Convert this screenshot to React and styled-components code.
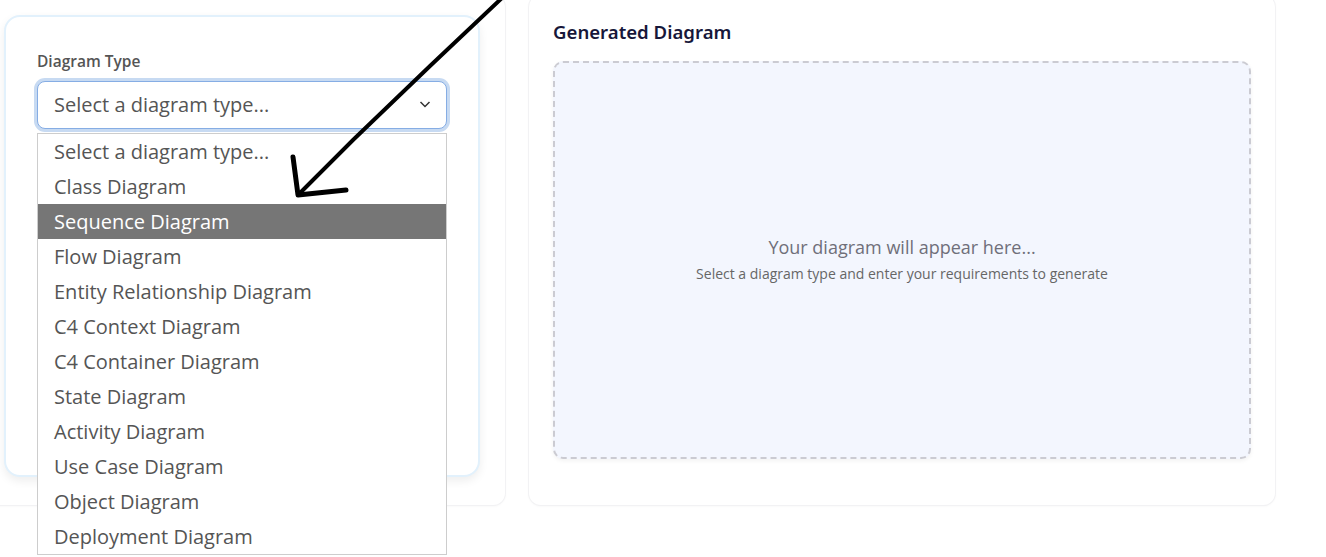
import React from "react";
import styled, { createGlobalStyle } from "styled-components";

const GlobalStyle = createGlobalStyle`
  html, body {
    margin: 0;
    background: #fff;
  }
  body {
    font-family: "Open Sans", "Noto Sans", sans-serif;
  }
  #root {
    min-height: 562px;
  }
`;

const Page = styled.div`
  position: relative;
  display: grid;
  grid-template-columns: 525px 746px;
  gap: 24px;
  align-items: start;
  margin: -5px 0 0 -20px;
`;

const Panel = styled.section`
  height: 510px;
  box-sizing: border-box;
  background: #fff;
  border-radius: 12px;
  box-shadow: 0 0 0 1px #f2f2f4, 0 1px 3px rgba(0, 0, 0, 0.05);
  padding: ${(p) => p.pad};
  display: flex;
  flex-direction: column;
`;

const FormCard = styled.div`
  position: relative;
  height: 462px;
  box-sizing: border-box;
  border: 2px solid #e2f1fc;
  border-radius: 16px;
  padding: 33px 31px;
  box-shadow: 0 4px 10px rgba(0, 0, 0, 0.07);
  background: #fff;
`;

const Label = styled.label`
  display: block;
  font-size: 15.5px;
  font-weight: 600;
  line-height: 22px;
  color: #555;
  margin-bottom: 9px;
`;

const SelectBox = styled.div`
  position: relative;
  height: 48px;
  box-sizing: border-box;
  border: 1px solid #86ade4;
  border-radius: 8px;
  box-shadow: 0 0 0 3px #c7daf2;
  display: flex;
  align-items: center;
  justify-content: space-between;
  padding: 0 14px 2px 16px;
  font-size: 20px;
  color: #555;
  background: #fff;
`;

const Chevron = styled.svg`
  width: 14px;
  height: 14px;
  color: #333;
`;

const OptionList = styled.ul`
  position: absolute;
  top: calc(100% + 5px);
  left: -1px;
  right: -1px;
  margin: 0;
  padding: 0;
  list-style: none;
  border: 1px solid #cdcdcd;
  background: #fff;
  z-index: 5;
`;

const Option = styled.li`
  height: 35px;
  line-height: 35px;
  padding-left: 16px;
  font-size: 20px;
  color: ${(p) => (p.active ? "#fff" : "#555")};
  background: ${(p) => (p.active ? "#767676" : "transparent")};
  white-space: nowrap;
`;

const Heading = styled.h2`
  margin: 0 0 16px;
  font-family: "Noto Sans", sans-serif;
  font-size: 18.6px;
  font-weight: 600;
  line-height: 26px;
  color: #17173a;
`;

const Preview = styled.div`
  height: 398px;
  box-sizing: border-box;
  border: 2px dashed #cbcbd2;
  border-radius: 10px;
  background: #f3f6fe;
  box-shadow: 0 2px 4px rgba(0, 0, 0, 0.05);
  display: flex;
  flex-direction: column;
  align-items: center;
  justify-content: center;
  text-align: center;
  padding-bottom: 2px;
`;

const Placeholder = styled.p`
  margin: 0;
  font-size: 18px;
  line-height: 24px;
  color: #6f6f7a;
`;

const Hint = styled.p`
  margin: 6px 0 0;
  font-size: 14px;
  line-height: 18px;
  color: #666;
`;

const Scribble = styled.svg`
  position: fixed;
  top: 0;
  left: 0;
  width: 1326px;
  height: 557px;
  pointer-events: none;
  z-index: 10;
`;

const options = [
  "Select a diagram type...",
  "Class Diagram",
  "Sequence Diagram",
  "Flow Diagram",
  "Entity Relationship Diagram",
  "C4 Context Diagram",
  "C4 Container Diagram",
  "State Diagram",
  "Activity Diagram",
  "Use Case Diagram",
  "Object Diagram",
  "Deployment Diagram",
];

export default function App() {
  return (
    <>
      <GlobalStyle />
      <Page>
        <Panel pad="20px 25px 28px 24px">
          <FormCard>
            <Label>Diagram Type</Label>
            <SelectBox>
              <span>Select a diagram type...</span>
              <Chevron viewBox="0 0 14 14" fill="none" stroke="currentColor" strokeWidth="1.5">
                <path d="M2.5 5 L7 9.5 L11.5 5" />
              </Chevron>
              <OptionList>
                {options.map((o) => (
                  <Option key={o} active={o === "Sequence Diagram"}>
                    {o}
                  </Option>
                ))}
              </OptionList>
            </SelectBox>
          </FormCard>
        </Panel>

        <Panel pad="24px">
          <Heading>Generated Diagram</Heading>
          <Preview>
            <Placeholder>Your diagram will appear here...</Placeholder>
            <Hint>Select a diagram type and enter your requirements to generate</Hint>
          </Preview>
        </Panel>
      </Page>

      <Scribble viewBox="0 0 1326 557" fill="none" stroke="#000" strokeLinecap="round" strokeLinejoin="round">
        <path d="M503 -3 L430 66 L353 140 L299 194" strokeWidth="4" />
        <path d="M293 157 L298 195 L346 190" strokeWidth="5" />
      </Scribble>
    </>
  );
}
